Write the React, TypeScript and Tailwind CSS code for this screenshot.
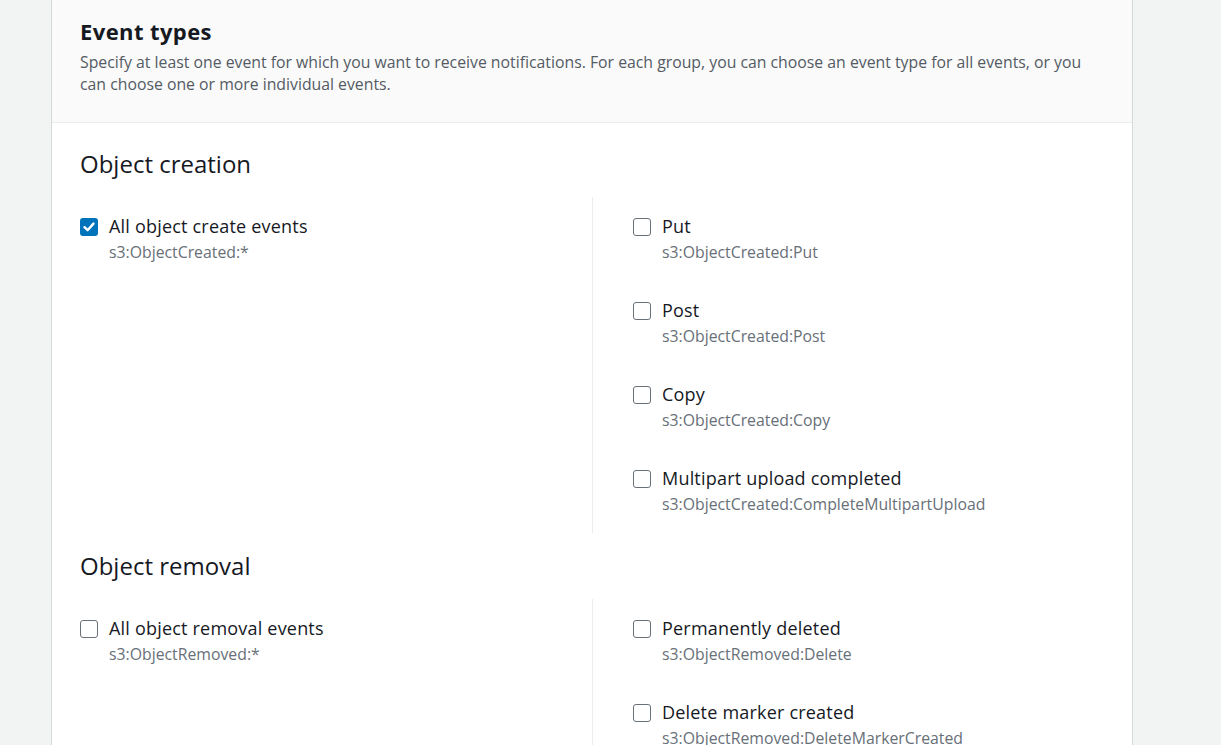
import React from "react";

type Item = { label: string; code: string; checked?: boolean };

function Checkbox({ checked }: { checked?: boolean }) {
  if (checked) {
    return (
      <span className="mt-[4px] flex h-[18px] w-[18px] shrink-0 items-center justify-center rounded-[3px] bg-[#0073bb]">
        <svg width="14" height="14" viewBox="0 0 14 14">
          <path d="M2.5 7.2 L5.6 10.2 L11.5 3.6" fill="none" stroke="#fff" strokeWidth="2.4" strokeLinecap="round" strokeLinejoin="round" />
        </svg>
      </span>
    );
  }
  return <span className="mt-[4px] h-[18px] w-[18px] shrink-0 rounded-[3px] border-[1.5px] border-[#687078] bg-white" />;
}

function Row({ item }: { item: Item }) {
  return (
    <div className="flex gap-[11px]">
      <Checkbox checked={item.checked} />
      <div className="flex flex-col">
        <span className="text-[18px] leading-[24px] tracking-[0.2px] text-[#16191f]">{item.label}</span>
        <span className="mt-[4px] text-[15.8px] leading-[20px] text-[#687078]">{item.code}</span>
      </div>
    </div>
  );
}

function Section({ title, left, right }: { title: string; left: Item; right: Item[] }) {
  return (
    <div>
      <h3 className="text-[24px] leading-[30px] text-[#16191f]">{title}</h3>
      <div className="mt-[18px] grid grid-cols-2">
        <div className="pt-[17px] pb-[19px]">
          <Row item={left} />
        </div>
        <div className="flex flex-col gap-[36px] border-l border-[#eaeded] pl-[40px] pt-[17px] pb-[19px]">
          {right.map((r) => (
            <Row key={r.code} item={r} />
          ))}
        </div>
      </div>
    </div>
  );
}

export default function App() {
  return (
    <div className="min-h-[745px] bg-[#f2f3f3]" style={{ fontFamily: "'Open Sans', 'Noto Sans', sans-serif" }}>
      <div className="ml-[51px] w-[1082px] border-x border-[#d5dbdb] bg-white">
        <div className="border-b border-[#eaeded] bg-[#fafafa] px-[28px] pt-[17px] pb-[27px]">
          <h2 className="text-[22px] font-bold leading-[28px] tracking-[0.4px] text-[#16191f]">Event types</h2>
          <p className="mt-[6px] text-[15.8px] leading-[22px] text-[#545b64]">
            Specify at least one event for which you want to receive notifications. For each group, you can choose an event type for all events, or you can choose one or more individual events.
          </p>
        </div>
        <div className="px-[28px] pt-[26px]">
          <Section
            title="Object creation"
            left={{ label: "All object create events", code: "s3:ObjectCreated:*", checked: true }}
            right={[
              { label: "Put", code: "s3:ObjectCreated:Put" },
              { label: "Post", code: "s3:ObjectCreated:Post" },
              { label: "Copy", code: "s3:ObjectCreated:Copy" },
              { label: "Multipart upload completed", code: "s3:ObjectCreated:CompleteMultipartUpload" },
            ]}
          />
          <div className="mt-[18px]">
            <Section
              title="Object removal"
              left={{ label: "All object removal events", code: "s3:ObjectRemoved:*" }}
              right={[
                { label: "Permanently deleted", code: "s3:ObjectRemoved:Delete" },
                { label: "Delete marker created", code: "s3:ObjectRemoved:DeleteMarkerCreated" },
              ]}
            />
          </div>
        </div>
      </div>
    </div>
  );
}
